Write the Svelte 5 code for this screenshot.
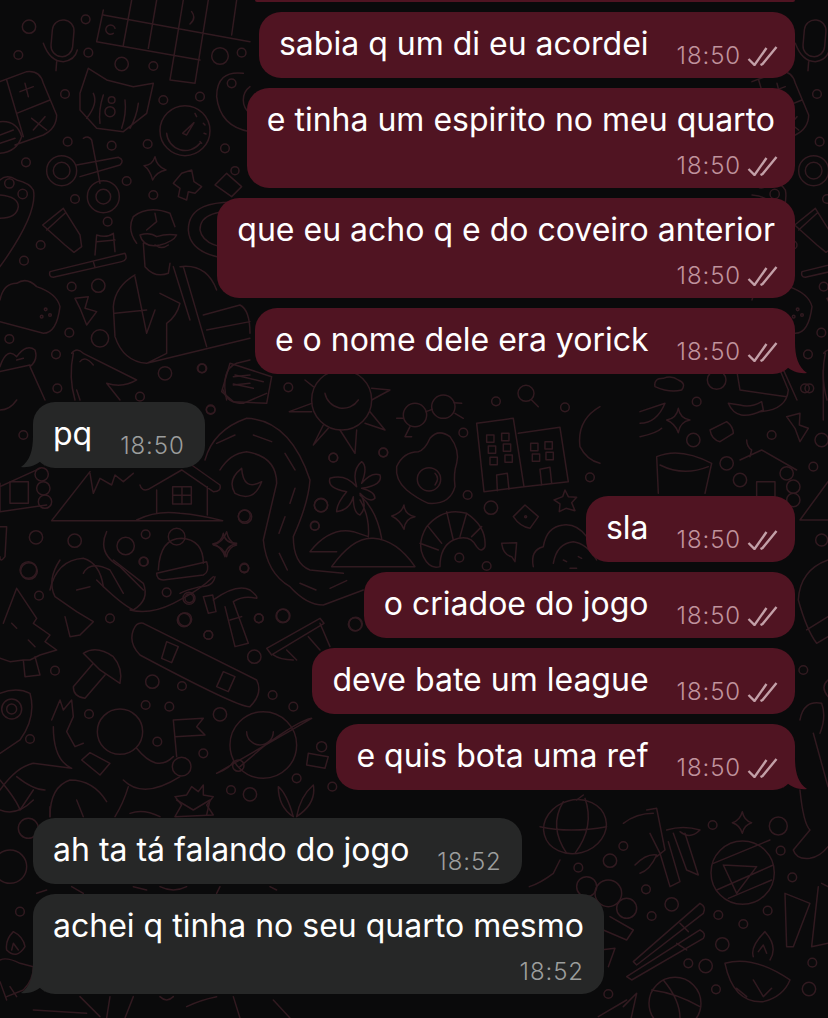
<script lang="ts">
  type Msg = { text: string; time: string; out: boolean; tall?: boolean; tail?: boolean; gap?: boolean };
  const messages: Msg[] = [
    { text: 'sabia q um di eu acordei', time: '18:50', out: true },
    { text: 'e tinha um espirito no meu quarto', time: '18:50', out: true, tall: true },
    { text: 'que eu acho q e do coveiro anterior', time: '18:50', out: true, tall: true },
    { text: 'e o nome dele era yorick', time: '18:50', out: true, tail: true },
    { text: 'pq', time: '18:50', out: false, tail: true, gap: true },
    { text: 'sla', time: '18:50', out: true, gap: true },
    { text: 'o criadoe do jogo', time: '18:50', out: true },
    { text: 'deve bate um league', time: '18:50', out: true },
    { text: 'e quis bota uma ref', time: '18:50', out: true, tail: true },
    { text: 'ah ta tá falando do jogo', time: '18:52', out: false, gap: true },
    { text: 'achei q tinha no seu quarto mesmo', time: '18:52', out: false, tall: true, tail: true }
  ];
  // little circles of the wallpaper, per tile, in tile units (3 units = 1px)
  const dotsA = [[87,80,20],[257,58],[55,165],[265,158],[365,192,20],[460,198],[660,168,25],[725,158],[195,282],[490,300],[600,290],[203,425],[335,437],[443,432],[675,445],[78,487],[380,543],[225,597],[460,585],[323,665],[122,735],[72,782],[215,860],[295,857,20],[208,998],[300,1015,26],[28,1017],[168,1063],[172,1165],[495,1120,20],[605,1105],[420,1190],[695,250]];
  const dotsB = [[70,135],[632,58],[733,378,18],[108,442,20],[224,452,20],[437,433],[377,468,26],[432,515],[85,540,25],[733,533]];
  const dotsC = [[92,150],[325,82],[67,25],[460,293],[610,278],[423,435,20],[405,498],[195,470,20],[193,625],[236,775],[308,768,20],[85,825],[527,792,20],[15,778,20],[27,715,18]];
  const dotsD = [[100,233],[250,217],[63,376,20],[44,437],[490,158],[503,345],[573,383,20],[588,64],[795,82],[870,292],[478,533],[560,558],[165,733,20]];
  const dotsE = [[87,33,25],[117,107],[330,175],[165,332],[500,97],[568,115],[552,180,20],[625,225],[777,175],[850,167,20],[763,290,20],[457,365,20],[546,378],[818,405],[880,440],[437,435],[508,440],[660,463,20],[267,462],[472,545],[610,580],[90,537],[693,690],[750,703,20],[890,655],[997,680],[733,25],[430,5]];
  const dotsF = [[578,105],[310,168],[270,212,20],[175,233],[378,298],[455,343,20],[395,378],[595,375],[670,402],[743,362],[782,182],[817,262],[607,463,20],[505,520],[557,528,20],[588,598],[877,518],[867,597,20],[265,612],[775,108,27]];
  const dotsG = [[230,30,28],[170,95],[495,55],[160,210,20],[395,195],[545,210,20],[520,290],[260,280,20],[545,510,18],[490,900]];
</script>

<div class="page">
  <svg class="doodles" viewBox="0 0 828 1018" aria-hidden="true">
    <defs>
      <g id="tile-a">
        {#each dotsA as [x, y, r]}<circle cx={x} cy={y} r={r || 13} />{/each}
        <path d="M310 30 L290 125 L600 180 M310 45 L750 125 M395 0 L370 135 M470 0 L445 145 M550 0 L510 240 L585 250 L625 0 M710 0 L695 105 M345 85 a14 14 0 1 0 -5 15 M575 35 Q590 55 570 72" />
        <rect x="155" y="60" width="65" height="110" rx="32" transform="rotate(5 188 115)" />
        <path d="M130 130 Q150 185 190 185 Q225 180 232 150 M170 185 L168 212" />
        <path d="M0 245 L80 215 Q120 210 130 250 L170 345 Q170 385 130 405 L45 435 M20 240 L70 410 M50 340 L150 300 M60 275 L100 260 M75 250 L85 290 M95 355 L140 390 M135 350 L100 390 M0 365 Q50 360 65 410 Q50 455 0 460 M0 405 L40 390 M0 430 L45 415" />
        <path d="M265 205 L320 240 L400 260 L460 250 L440 340 L370 395 L290 385 L240 330 L240 280 Z M280 280 Q295 310 260 355 M310 285 Q295 330 300 370 M375 300 Q380 340 365 385 M415 310 Q410 350 390 385" />
        <circle cx="330" cy="335" r="15" /><circle cx="335" cy="300" r="10" />
        <circle cx="555" cy="392" r="75" />
        <path d="M500 400 A56 56 0 0 0 600 430 M548 400 L582 368 L560 405 Z M585 340 L590 350 M610 370 L615 375 M612 400 L618 402 M600 425 L605 430" />
        <circle cx="185" cy="512" r="45" /><circle cx="185" cy="512" r="25" />
        <circle cx="310" cy="590" r="48" /><circle cx="310" cy="590" r="22" />
        <path d="M230 495 L355 472 Q375 480 360 495 L240 530 M250 415 Q265 405 275 420 L300 550" />
        <path d="M465 470 Q470 500 498 510 Q470 515 458 540 Q450 510 432 497 Q458 495 465 470 Z" />
        <path d="M545 520 L575 510 L582 545 L605 560 L585 580 L565 575 L560 600 L535 590 L540 565 L520 550 Z" />
        <path d="M645 555 L680 520 L725 560 L695 590 Z" /><circle cx="705" cy="512" r="12" />
        <path d="M0 540 Q20 520 50 540 Q90 550 100 570 Q115 640 0 800 M0 585 Q55 590 55 620 Q50 655 0 655" />
        <circle cx="28" cy="550" r="14" /><circle cx="68" cy="582" r="14" />
        <path d="M128 675 L190 625 L240 705 L245 740 L222 757 L195 735 Z M140 690 L195 640" />
        <path d="M150 815 L375 760 Q385 780 365 785 L160 832 Q145 830 150 815 Z M280 785 L285 802 M285 765 L290 705 Q320 715 340 700 L345 755 M290 725 L345 720" />
        <path d="M410 730 Q380 690 400 650 Q445 615 510 640 L525 680 M420 705 Q450 695 470 710 Q500 700 530 705 Q520 725 480 735 Q430 745 420 705 M430 730 L435 800 Q465 835 505 820 L510 790 M465 735 Q485 750 505 735 M440 690 L470 665 L465 640" />
        <path d="M405 825 Q345 860 340 920 L345 1010 Q370 1085 440 1090 L500 1060 L500 970 Q530 950 540 910 L480 880 M345 940 L440 930 M405 830 L440 1000 L465 930 M540 800 Q620 790 650 870 M520 800 L570 960 M550 800 L620 1040 M440 1090 L750 1015 M610 945 L720 915 Q750 930 750 1000 M620 990 L750 965" />
        <path d="M0 900 Q10 850 50 850 Q80 830 110 860 Q170 880 180 920 Q170 1000 130 1000 L0 965" />
        <circle cx="125" cy="950" r="4" /><circle cx="150" cy="945" r="4" /><circle cx="137" cy="928" r="4" />
        <path d="M225 895 L265 890 L255 925 L290 935 L260 975 L240 925 Z" />
        <path d="M0 1100 Q20 1040 50 1070 Q80 1030 105 1050 Q115 1080 90 1100 L135 1200 M0 1115 L90 1095 M50 1080 L70 1075" />
        <path d="M215 1060 Q230 1040 250 1060 L410 1140 Q370 1165 320 1150 L360 1200 M220 1060 Q205 1130 225 1200 M240 1085 Q255 1065 280 1095" />
        <path d="M680 1200 Q660 1110 710 1090 L750 1080 M700 1130 L750 1125 M700 1155 L750 1150" />
        <path d="M730 220 Q650 210 650 290 Q660 380 750 395 M750 260 A50 50 0 0 0 750 340" />
        <path d="M750 610 Q565 590 565 690 Q570 780 750 780 M750 640 Q600 620 600 690 Q610 750 750 750" />
      </g>
    </defs>

    <g class="t" transform="scale(0.3333)"><use href="#tile-a" /></g>
    <g class="t" transform="translate(752 0) scale(0.3333)"><use href="#tile-a" /></g>

    <!-- below the pq bubble -->
    <g class="t" transform="translate(0 390) scale(0.3333)">
      {#each dotsB as [x, y, r]}<circle cx={x} cy={y} r={r || 13} />{/each}
      <path d="M0 60 Q30 60 50 30 M230 0 L240 30 M670 0 Q680 40 730 40 L800 10" />
      <path d="M420 285 Q425 305 445 298 L545 240 L640 305 Q665 305 660 285 L575 225 M470 300 V370 M622 290 V375 M155 392 L668 392 M155 392 L270 245 M410 390 Q470 360 540 370 Q600 375 668 392 M270 250 L280 310 L300 265 L335 285 L345 255 L370 275 L400 250" />
      <rect x="518" y="290" width="56" height="52" /><path d="M546 290 V342 M518 316 H574" />
      <path d="M0 290 L120 235 M0 365 L140 345 M0 280 L0 365" />
      <rect x="30" y="275" width="55" height="65" />
      <circle cx="125" cy="253" r="20" /><circle cx="130" cy="295" r="20" /><circle cx="135" cy="335" r="20" />
      <path d="M475 540 Q480 445 545 445 Q610 450 610 520 M470 550 L620 515 Q630 545 610 555 L490 570 Q470 570 470 550" />
      <circle cx="530" cy="440" r="25" />
      <path d="M680 425 Q685 455 710 465 Q685 470 680 500 Q670 470 640 465 Q670 455 680 425 Z" />
      <path d="M150 600 Q170 510 250 505 Q300 520 310 590 M320 425 Q290 490 360 530 L430 600 M0 410 L20 410 L15 500 Q0 520 0 500" />
    </g>

    <!-- road, sun, moon, hammer -->
    <g class="t" transform="translate(180 360) scale(0.3333)">
      {#each dotsC as [x, y, r]}<circle cx={x} cy={y} r={r || 13} />{/each}
      <path d="M150 10 L275 50 L260 130 L160 125 L125 95 Z M165 45 L250 65 M160 72 L220 85" />
      <circle cx="485" cy="120" r="90" />
      <path d="M435 100 A55 55 0 0 0 535 120 M395 130 L328 155 L395 155 M430 195 L400 255 L445 205 M480 210 L525 280 L530 210 M555 190 L615 210 L570 155 M575 85 L630 90 L575 120 M375 60 L400 80" />
      <path d="M530 380 Q495 340 450 355 Q440 385 500 395 Q470 430 470 455 Q510 450 520 410 Q520 460 540 465 Q565 440 540 400 Q570 430 585 415 Q585 395 545 385 Q610 375 600 345 Q575 335 545 370 Q565 320 545 305 Q515 330 530 380 Z M540 405 Q590 450 605 535 M540 420 Q570 470 565 530" />
      <path d="M390 575 Q450 500 520 515 L565 530 M390 575 L470 575 M455 620 Q520 530 580 535 Q650 540 705 620 Z" />
      <path d="M75 300 Q100 210 200 175 Q330 180 390 360 Q385 430 340 530 Q340 610 390 630 L490 640 M120 330 Q150 280 200 275 Q290 290 290 370 L250 540 Q260 640 330 680 Q380 735 430 735 L550 690" />
      <path d="M110 250 L165 225 M220 225 L275 245 M315 280 L345 330 M345 385 L330 430 M315 470 L297 520 M298 580 L322 630 M360 670 L408 690 M450 685 L500 662" />
      <path d="M185 325 Q140 360 165 400 Q220 430 245 365 Q190 395 185 325 Z" />
      <path d="M130 520 Q135 550 170 550 Q135 560 135 590 Q125 560 98 552 Q125 548 130 520 Z M672 435 Q675 465 705 470 Q675 475 672 508 Q660 480 635 468 Q665 460 672 435 Z" />
      <path d="M70 710 L98 705 L108 755 L85 760 Z M100 720 Q170 670 210 690 Q235 710 230 715 Q190 705 160 725 L205 850 L165 860 L135 740 M150 780 L185 770" />
      <path d="M260 865 L420 775 L432 790 L275 885 Z M280 885 Q300 900 340 900 M420 790 L450 860 M320 870 L350 900 M385 830 L420 870" />
      <path d="M105 650 Q100 680 60 680 Q20 690 0 700" />
    </g>

    <!-- egg, buildings, croissant -->
    <g class="t" transform="translate(300 380) scale(0.3333)">
      {#each dotsD as [x, y, r]}<circle cx={x} cy={y} r={r || 13} />{/each}
      <circle cx="345" cy="105" r="35" /><circle cx="430" cy="80" r="35" />
      <path d="M378 95 L397 88 M462 68 L485 70 M310 115 L290 115 M330 140 L315 170 L335 170 M465 100 L490 115" />
      <circle cx="678" cy="40" r="24" /><path d="M695 60 L715 80" />
      <path d="M390 175 Q415 145 450 170 Q480 210 470 250 Q460 280 465 320 Q450 375 385 370 Q350 355 320 330 Q285 300 290 260 Q310 215 355 215 Q375 210 390 175 Z M405 280 Q420 295 405 315" />
      <circle cx="387" cy="298" r="35" />
      <path d="M530 130 Q600 120 640 115 L672 320 L552 335 Z M655 160 L780 142 L805 305 L672 320 M592 332 L590 285 L622 280 L627 328 M725 315 L720 268 L750 262 L755 310" />
      <path d="M560 165 h22 v22 h-22 z M605 160 h22 v22 h-22 z M565 198 h22 v22 h-22 z M610 192 h22 v22 h-22 z M570 232 h22 v22 h-22 z M615 225 h22 v22 h-22 z M692 190 h22 v22 h-22 z M735 185 h22 v22 h-22 z M697 222 h22 v22 h-22 z M738 217 h22 v22 h-22 z" />
      <path d="M370 530 Q350 490 380 440 Q430 380 500 400 Q560 440 555 500 Q545 520 530 500 Q510 460 460 480 Q420 500 420 560 Q390 570 370 530 M385 440 L425 490 M440 395 L460 480 M500 400 L480 470 M545 440 L515 470 M360 490 L415 510" />
      <path d="M640 410 L675 375 L715 410 L690 445 Q660 440 640 410 Z" /><circle cx="677" cy="410" r="3" />
      <path d="M795 330 L805 350 L830 352 L815 368 L825 392 L798 385 L778 395 L780 372 L762 360 L788 350 Z" />
      <path d="M700 560 Q690 510 730 500 Q740 440 790 435 Q830 430 860 470 M760 550 Q770 490 820 485 Q860 490 890 540 M790 540 L800 545 M835 530 L845 535 M810 565 L830 565" />
      <path d="M605 490 L650 488 L645 545 L635 530 Q610 525 605 490 Z M900 80 Q830 120 840 200 Q860 240 900 250" />
    </g>

    <!-- right side, above the sla bubble -->
    <g class="t" transform="translate(640 370) scale(0.3333)">
      {#each dotsG as [x, y, r]}<circle cx={x} cy={y} r={r || 13} />{/each}
      <path d="M45 50 Q40 25 70 25 Q95 15 115 30 Q140 40 125 60 Q90 70 45 50 Z M290 0 L300 60 M265 100 Q290 160 370 120 L365 95 Q330 115 300 105 Z M300 60 L440 80 M420 0 L445 60 Q440 120 360 125" />
      <path d="M115 115 Q120 145 150 150 Q120 155 115 188 Q105 160 80 150 Q110 145 115 115 Z M210 180 L260 155 Q280 170 280 190 L240 215 Q215 210 210 180 Z M440 140 L480 130 L478 165 L505 175 L480 215 L465 175 Z" />
      <path d="M0 125 L75 100 Q50 160 0 160 M0 200 Q50 190 65 175 M50 260 Q120 230 215 280 L195 370 M50 260 L55 370 M60 285 Q130 320 205 290" />
      <path d="M300 270 L365 240 L470 300 M320 210 Q320 230 335 240 L330 260 M480 450 L564 335 M480 450 L564 450" />
      <circle cx="440" cy="310" r="20" /><circle cx="460" cy="350" r="20" /><circle cx="460" cy="390" r="20" /><circle cx="300" cy="330" r="20" />
      <rect x="350" y="335" width="55" height="45" />
      <path d="M564 570 Q480 600 475 690 Q500 780 530 820 L564 800 M500 780 L564 740 M480 1050 Q490 990 545 1000 Q560 1040 540 1090 M520 1090 L564 1250 M564 930 Q540 950 564 980 M550 0 V150" />
    </g>

    <!-- tree, snowboard, planet -->
    <g class="t" transform="translate(0 560) scale(0.3333)">
      {#each dotsE as [x, y, r]}<circle cx={x} cy={y} r={r || 13} />{/each}
      <path d="M50 85 L110 175 L100 190 L150 225 L135 245 L170 270 L120 285 L90 300 L70 300 L30 305 L0 295 M70 300 L75 350 L120 345 L105 290 M50 85 L10 190 M35 190 L50 205 M85 240 L105 260" />
      <path d="M180 0 Q140 60 165 110 L230 155 L280 185 L240 225 L210 230 L195 170 M250 40 Q270 0 330 30 L370 100 M230 90 L270 80 M390 150 Q450 165 520 130 Q600 90 640 50 M340 0 L430 70 Q450 120 400 150 Q360 130 290 60" />
      <path d="M430 190 L770 360 Q790 400 750 440 Q720 445 420 285 Q385 250 400 210 Q410 185 430 190 Z M500 245 L535 260 L515 308 L485 295 Z M670 335 L705 350 L685 395 L650 380 Z" />
      <path d="M250 280 Q290 255 340 290 Q370 325 360 370 L300 330 Z M280 310 L220 380 Q220 410 255 415 L315 345" />
      <path d="M0 400 Q50 380 90 400 Q110 470 60 540 L0 580" />
      <circle cx="35" cy="447" r="30" /><circle cx="35" cy="447" r="15" />
      <path d="M155 480 L180 420 L190 450 L215 420 L220 470 L200 515 L225 560 L250 550 M160 500 Q160 600 215 625 M410 565 Q470 640 520 590 M245 600 L270 578 L330 610 L300 645 Z M370 660 Q430 720 540 650 M0 690 Q50 620 100 610 L215 625 M50 650 Q100 690 135 690 M150 770 Q150 680 210 660 Q280 660 320 725 M385 680 Q370 730 345 770 M0 660 Q50 720 60 750 M100 690 L60 750" />
      <circle cx="360" cy="515" r="68" /><circle cx="545" cy="620" r="28" />
      <path d="M520 480 L610 475 L590 500 L615 525 L525 530 M520 480 L530 590" />
      <circle cx="790" cy="555" r="100" />
      <path d="M740 515 A40 40 0 0 0 820 515 M650 640 L935 475 Q900 480 790 560 L720 620 M650 640 Q690 625 700 605" />
      <circle cx="715" cy="617" r="17" />
      <path d="M925 580 L985 590 L975 625 L920 615 Z" /><circle cx="965" cy="560" r="15" />
      <path d="M525 710 L560 705 L575 680 L595 695 L610 675 L610 705 L640 710 L620 735 L640 765 L525 770 L545 735 Z M835 680 Q860 700 880 770 Q835 740 835 680 Z M940 675 Q950 730 890 770 Q900 710 940 675 Z" />
    </g>

    <!-- slivers around the last two bubbles -->
    <g class="t" transform="translate(0 800) scale(0.3333)">
      <circle cx="85" cy="85" r="30" /><circle cx="30" cy="200" r="50" /><circle cx="60" cy="335" r="13" />
      <path d="M0 30 Q50 50 100 0 M150 20 V50 M230 0 L250 50 M390 40 Q430 25 480 50 M530 0 L580 30 L630 0 L620 45 M215 260 L250 280 M400 260 L440 270 M480 260 Q520 280 560 260 M660 260 L650 280 M810 260 L830 270 M110 280 L140 270" />
      <path d="M100 630 L260 640 M240 590 L300 650 M330 590 L320 654 M400 590 L375 654 M480 590 Q500 610 520 590 M560 620 Q600 600 650 590 M700 590 L720 654 M820 600 L870 654" />
      <path d="M40 395 Q70 410 75 440 Q50 480 20 450 Q15 420 40 395 Z M35 450 L40 430 L55 450 M0 480 Q20 470 60 490 L100 500 Q100 540 70 570 L20 590 M30 560 L50 590 M0 545 L20 600" />
    </g>

    <!-- lantern, bamboo, disco ball, chopsticks, lamp -->
    <g class="t" transform="translate(520 790) scale(0.3333)">
      {#each dotsF as [x, y, r]}<circle cx={x} cy={y} r={r || 13} />{/each}
      <ellipse cx="165" cy="110" rx="95" ry="80" transform="rotate(-15 165 110)" />
      <path d="M130 35 Q85 110 140 190 M195 25 Q225 110 165 190 M60 110 Q150 130 260 110 M120 210 L100 250 Q60 280 28 290 M170 30 L190 15" />
      <path d="M380 60 L410 55 L435 180 L410 200 M390 130 L420 190 L450 290 L480 275 L445 155 M460 130 L500 240 L535 255 L495 130 M310 100 Q350 70 400 70 M440 120 Q490 105 540 120 Q510 150 480 125 M345 225 Q380 190 410 195 Q390 240 360 250" />
      <circle cx="668" cy="248" r="95" />
      <path d="M580 220 L750 150 M590 300 L760 225 M625 325 L755 270 M610 225 L650 310 M710 230 L650 310 M610 225 L710 230" />
      <path d="M340 515 L540 340 Q560 350 550 370 L350 525 Z M320 560 L540 420 Q560 430 550 445 L335 570 Z M480 400 L505 425 M470 460 L500 480" />
      <path d="M615 520 Q700 495 810 570 Q790 620 730 635 Q640 640 615 520 Z M700 500 Q690 470 735 425 Q775 470 750 510 M715 485 L730 465 L740 490 M650 595 L680 620 M700 570 L730 620 L755 595" />
      <circle cx="465" cy="640" r="78" />
      <path d="M395 600 Q470 610 540 650 M430 570 Q480 630 480 684" />
      <path d="M795 310 L870 340 L820 470 L800 470 Z M905 280 L924 290 M895 290 L875 470 L924 460" />
      <path d="M667 65 Q672 92 695 98 Q672 105 667 130 Q660 105 637 98 Q660 92 667 65 Z M840 0 Q850 100 870 120 L820 180 Q830 210 870 205 Q900 200 924 170" />
      <circle cx="200" cy="290" r="30" /><circle cx="265" cy="310" r="40" /><circle cx="320" cy="355" r="30" />
      <path d="M270 380 L340 420 L320 450 L250 420 M240 480 L285 475 L265 530 M310 650 L350 610 L330 700 M235 680 L320 630" />
    </g>
  </svg>

  <div class="chat">
    <div class="bubble out sliver"></div>
    {#each messages as m}
      <div class="bubble" class:out={m.out} class:in={!m.out} class:tall={m.tall} class:gap={m.gap}>
        {#if m.tail}
          <svg class="tail" viewBox="0 0 24 32" aria-hidden="true">
            <path d="M12 0 C12 14 15 25 24 31 C16 32 9 29 4 25 L0 30 L0 0 Z" />
          </svg>
        {/if}
        <span class="text">{m.text}</span>
        <span class="meta">
          <span class="time">{m.time}</span>
          {#if m.out}
            <svg class="ticks" viewBox="0 0 30 20" aria-hidden="true">
              <path d="M1 13 L7 19 L19 2 M13 19 L15 18 L29 1" />
            </svg>
          {/if}
        </span>
      </div>
    {/each}
  </div>
</div>

<style>
  :global(body) { margin: 0; background: #0a0a0b; }
  .page {
    position: relative;
    width: 828px;
    height: 1018px;
    overflow: hidden;
    background: #0a0a0b;
    font-family: Inter, "Liberation Sans", sans-serif;
  }
  .doodles {
    position: absolute;
    inset: 0;
    width: 828px;
    height: 1018px;
    fill: none;
    stroke: #311a20;
    stroke-width: 1.5;
    stroke-linecap: round;
    stroke-linejoin: round;
  }
  .doodles path, .doodles circle, .doodles rect, .doodles ellipse {
    vector-effect: non-scaling-stroke;
  }
  .chat {
    position: relative;
    display: flex;
    flex-direction: column;
    gap: 10px;
    padding: 0 33px;
  }
  .bubble {
    position: relative;
    display: flex;
    align-items: flex-start;
    justify-content: space-between;
    gap: 28px;
    box-sizing: border-box;
    height: 66px;
    padding: 0 20px;
    border-radius: 22px;
  }
  .bubble.sliver {
    width: 540px;
    height: 2px;
    padding: 0;
    border-radius: 0 0 20px 20px;
  }
  .out { align-self: flex-end; background: #501422; }
  .in { align-self: flex-start; background: #262727; }
  .gap { margin-top: 18px; }
  .tall {
    display: block;
    height: 100px;
  }
  .text {
    display: block;
    padding-top: 12px;
    color: #fff;
    font-size: 32px;
    line-height: 40px;
    white-space: nowrap;
  }
  .meta {
    display: flex;
    align-items: center;
    gap: 6px;
    margin-right: -3px;
    padding-top: 30px;
    white-space: nowrap;
  }
  .in .meta { margin-right: 0; }
  .tall .meta { justify-content: flex-end; padding-top: 12px; }
  .time { font-size: 24px; font-weight: 300; line-height: 28px; letter-spacing: 0.9px; }
  .out .time { color: #c0939d; }
  .in .time { color: #9c9e9d; }
  .ticks {
    width: 31px;
    height: 20px;
    fill: none;
    stroke: #c3a0a8;
    stroke-width: 2.4;
  }
  .tail { position: absolute; bottom: 0; width: 24px; height: 32px; }
  .out .tail { right: -12px; fill: #501422; }
  .in .tail { left: -12px; fill: #262727; transform: scaleX(-1); }
</style>
